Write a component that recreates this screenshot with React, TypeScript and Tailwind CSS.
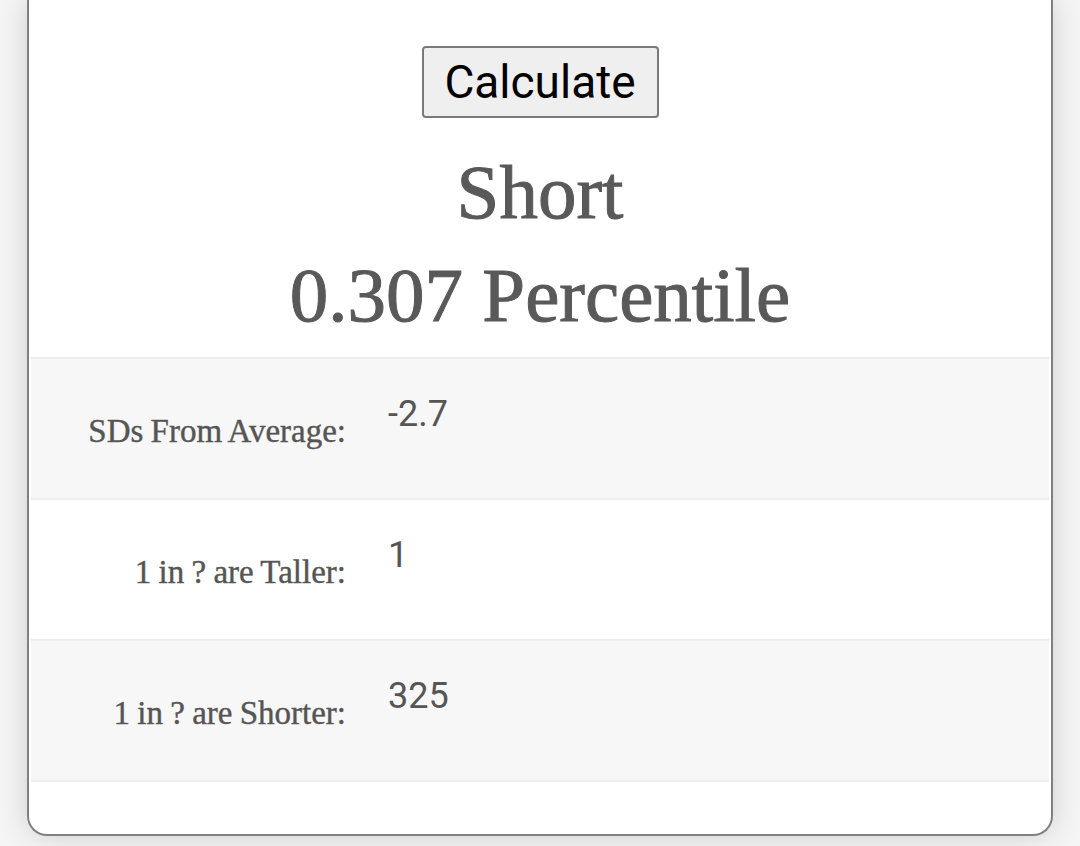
import React from "react";

const rows = [
  { label: "SDs From Average:", value: "-2.7" },
  { label: "1 in ? are Taller:", value: "1" },
  { label: "1 in ? are Shorter:", value: "325" },
];

const serif = "font-['Liberation_Serif',serif]";

export default function App() {
  return (
    <div className="min-h-[846px] bg-[#f5f5f5] px-[27px] pb-[11px]">
      <div className="rounded-b-[20px] border-x-2 border-b-2 border-[#808080] bg-white px-[2px] pb-[52px] shadow-[0_0_30px_rgba(0,0,0,0.16)]">
        <div className="flex flex-col items-center pt-[46px]">
          <button className="h-[72px] w-[237px] rounded-[4px] border-2 border-[#7a7a7a] bg-[#efefef] font-['Roboto',sans-serif] text-[46px] leading-none text-black">
            Calculate
          </button>
          <div className={`${serif} mt-[36px] text-[77px] leading-[77px] text-[#595959] [-webkit-text-stroke:1px_#595959]`}>
            Short
          </div>
          <div className={`${serif} mt-[26px] text-[77px] leading-[77px] text-[#595959] [-webkit-text-stroke:1px_#595959]`}>
            0.307 Percentile
          </div>
        </div>
        <div className="mt-[23px] border-t-2 border-[#eeeeee]">
          {rows.map((r, i) => (
            <div
              key={r.label}
              className={`flex h-[141px] border-b-2 border-[#eeeeee] ${i % 2 === 0 ? "bg-[#f7f7f7]" : "bg-white"}`}
            >
              <div className={`${serif} w-[315px] pt-[52px] text-right text-[33px] leading-[40px] text-[#555] [word-spacing:-1px] [-webkit-text-stroke:0.4px_#555]`}>
                {r.label}
              </div>
              <div className="pl-[42px] pt-[35px] font-['Roboto',sans-serif] text-[36px] leading-[40px] text-[#555]">
                {r.value}
              </div>
            </div>
          ))}
        </div>
      </div>
    </div>
  );
}
